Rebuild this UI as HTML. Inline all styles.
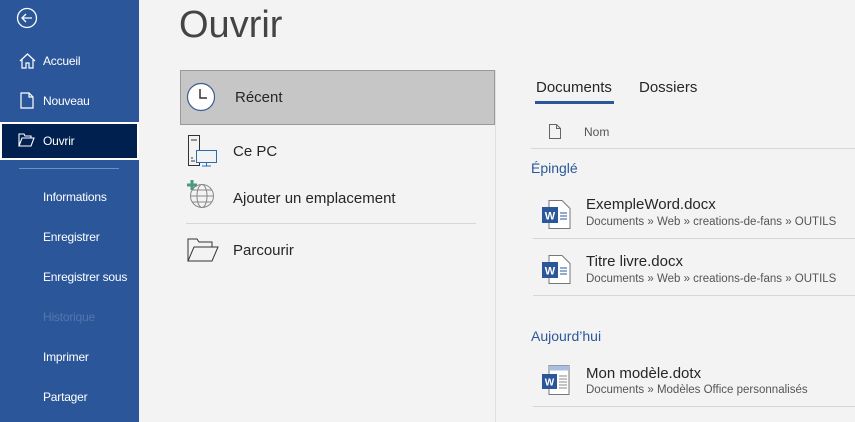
<!DOCTYPE html>
<html><head><meta charset="utf-8"><style>
*{margin:0;padding:0;box-sizing:border-box}
body{width:855px;height:422px;overflow:hidden;background:#f3f3f3;font-family:"Liberation Sans",sans-serif;position:relative;color:#262626}
.a{position:absolute;white-space:nowrap}
#side{position:absolute;left:0;top:0;width:139px;height:422px;background:#2b579a}
.s{position:absolute;color:#fff;font-size:12px;letter-spacing:-0.2px}
.t{font-size:15px;color:#262626}
.n{font-size:15px;color:#262626}
.p{font-size:11.5px;color:#555}
.h{font-size:14px;color:#2b579a}
.ln{position:absolute;height:1px;background:#d6d6d6}
</style></head><body>
<div id="side">
<svg class="a" style="left:16px;top:7px" width="22" height="22" viewBox="0 0 22 22" fill="none" stroke="#fff" stroke-width="1.3"><circle cx="11" cy="11" r="9.5"/><path d="M16 11H6M10 7l-4 4 4 4"/></svg>
<svg class="a" style="left:19px;top:53px" width="17" height="16" viewBox="0 0 17 16" fill="none" stroke="#fff" stroke-width="1.2"><path d="M1 8L8.5 1 16 8M3 6.5V15h4v-5h3v5h4V6.5"/></svg>
<div class="s" style="left:43px;top:54px">Accueil</div>
<svg class="a" style="left:20px;top:92px" width="14" height="17" viewBox="0 0 14 17" fill="none" stroke="#fff" stroke-width="1.2"><path d="M1 1h8l4 4v11H1z M9 1v4h4"/></svg>
<div class="s" style="left:43px;top:94px">Nouveau</div>
<div class="a" style="left:0;top:122px;width:139px;height:38px;background:#002050;border:2px solid #fff"></div>
<svg class="a" style="left:18px;top:133px" width="17" height="14" viewBox="0 0 17 14" fill="none" stroke="#fff" stroke-width="1.1"><path d="M1 13V1h5l1 2h6v2M1 13l3-8h12l-3 8z"/></svg>
<div class="s" style="left:43px;top:134px">Ouvrir</div>
<div class="a" style="left:19px;top:168px;width:100px;height:1px;background:#6d90c6"></div>
<div class="s" style="left:43px;top:190px">Informations</div>
<div class="s" style="left:43px;top:230px">Enregistrer</div>
<div class="s" style="left:43px;top:270px">Enregistrer sous</div>
<div class="s" style="left:43px;top:310px;color:#5377ad">Historique</div>
<div class="s" style="left:43px;top:350px">Imprimer</div>
<div class="s" style="left:43px;top:390px">Partager</div>
</div>
<div class="a" style="left:179px;top:4px;font-size:38px;color:#444">Ouvrir</div>
<div class="a" style="left:180px;top:70px;width:315px;height:55px;background:#c6c6c6;border:1px solid #999"></div>
<svg class="a" style="left:186px;top:82px" width="32" height="30" viewBox="0 0 32 30" fill="#fff" stroke="#3c5f95" stroke-width="1.2"><circle cx="15" cy="15" r="13.5"/><path d="M14 7v9h7" fill="none" stroke="#333" stroke-width="1.5"/></svg>
<div class="a t" style="left:235px;top:89px">Récent</div>
<svg class="a" style="left:187px;top:135px" width="32" height="32" viewBox="0 0 32 32" fill="none" stroke="#333" stroke-width="1"><path d="M1.5 .5h11v30h-11zM4 5h6M4 26h4M4 23h2"/><rect x="9.5" y="15.5" width="20" height="12" fill="#f3f3f3" stroke="#2b6cb0"/><path d="M19.5 28v3M15 31h9" stroke="#2b6cb0"/></svg>
<div class="a t" style="left:233px;top:143px">Ce PC</div>
<svg class="a" style="left:186px;top:179px" width="32" height="32" viewBox="0 0 32 32" fill="none" stroke="#888" stroke-width="1"><circle cx="16" cy="17" r="11.5"/><ellipse cx="16" cy="17" rx="5" ry="11.5"/><path d="M4.5 17h23M6 11h20M6 23h20"/><path d="M6 1v10M1 6h10" stroke="#4b9a7d" stroke-width="3"/></svg>
<div class="a t" style="left:233px;top:190px">Ajouter un emplacement</div>
<div class="ln" style="left:186px;top:223px;width:290px"></div>
<svg class="a" style="left:187px;top:238px" width="32" height="24" viewBox="0 0 32 24" fill="none" stroke="#333" stroke-width="1"><path d="M1 23V1h9l2 3h13v5M1 23l6-14h24l-6 14z"/></svg>
<div class="a t" style="left:233px;top:242px">Parcourir</div>
<div class="a" style="left:495px;top:70px;width:1px;height:352px;background:#e0e0e0"></div>
<div class="a" style="left:536px;top:79px;font-size:15px;color:#262626">Documents</div>
<div class="a" style="left:535px;top:101px;width:79px;height:3px;background:#2b579a"></div>
<div class="a" style="left:639px;top:79px;font-size:15px;color:#262626">Dossiers</div>
<svg class="a" style="left:549px;top:124px" width="12" height="15" viewBox="0 0 12 15" fill="none" stroke="#666" stroke-width="1"><path d="M.5.5h7l4 4v10H.5zM7.5.5v4h4"/></svg>
<div class="a" style="left:584px;top:125px;font-size:12px;color:#555">Nom</div>
<div class="ln" style="left:531px;top:148px;width:324px"></div>
<div class="a h" style="left:531px;top:160px">Épinglé</div>
<svg class="a" style="left:541px;top:200px" width="30" height="30" viewBox="0 0 30 30"><path d="M8 .5h13l8 8v20H8z" fill="#fff" stroke="#777"/><path d="M19 13h7M19 16h7M19 19h7" stroke="#2b579a"/><rect x="1" y="7" width="16" height="16" fill="#2b579a"/><text x="9" y="19.5" text-anchor="middle" font-size="11" font-weight="bold" fill="#fff" font-family="Liberation Sans">W</text></svg>
<div class="a n" style="left:586px;top:196px">ExempleWord.docx</div>
<div class="a p" style="left:586px;top:216px">Documents » Web » creations-de-fans » OUTILS</div>
<div class="ln" style="left:533px;top:238px;width:322px"></div>
<svg class="a" style="left:541px;top:255px" width="30" height="30" viewBox="0 0 30 30"><path d="M8 .5h13l8 8v20H8z" fill="#fff" stroke="#777"/><path d="M19 13h7M19 16h7M19 19h7" stroke="#2b579a"/><rect x="1" y="7" width="16" height="16" fill="#2b579a"/><text x="9" y="19.5" text-anchor="middle" font-size="11" font-weight="bold" fill="#fff" font-family="Liberation Sans">W</text></svg>
<div class="a n" style="left:586px;top:253px">Titre livre.docx</div>
<div class="a p" style="left:586px;top:273px">Documents » Web » creations-de-fans » OUTILS</div>
<div class="ln" style="left:533px;top:295px;width:322px"></div>
<div class="a h" style="left:531px;top:328px">Aujourd’hui</div>
<svg class="a" style="left:541px;top:365px" width="30" height="30" viewBox="0 0 30 30"><rect x="8" y=".5" width="20" height="29" fill="#fff" stroke="#777"/><rect x="8" y=".5" width="20" height="5" fill="#a9bfe0"/><path d="M18 11h8M18 14h8M18 17h8M18 20h8M18 23h8" stroke="#888"/><rect x="1" y="9" width="15" height="15" fill="#2b579a"/><text x="8.5" y="20.5" text-anchor="middle" font-size="10" font-weight="bold" fill="#fff" font-family="Liberation Sans">W</text></svg>
<div class="a n" style="left:586px;top:365px">Mon modèle.dotx</div>
<div class="a p" style="left:586px;top:384px">Documents » Modèles Office personnalisés</div>
<div class="ln" style="left:533px;top:406px;width:322px"></div>
</body></html>
